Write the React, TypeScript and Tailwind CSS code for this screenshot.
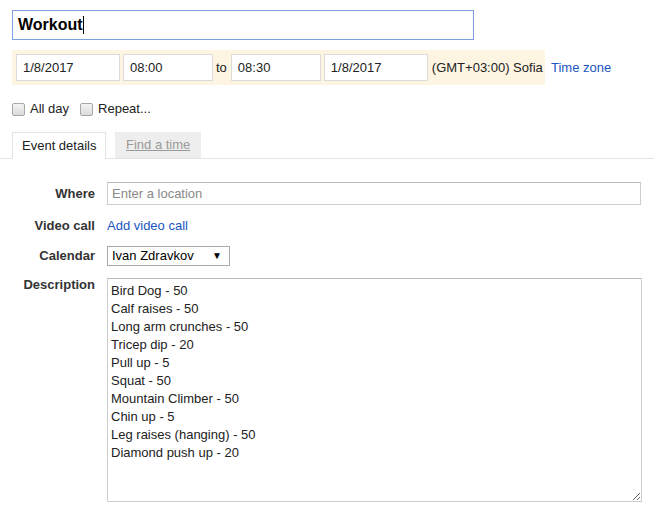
import React from "react";

const EXERCISES = [
  "Bird Dog - 50",
  "Calf raises - 50",
  "Long arm crunches - 50",
  "Tricep dip - 20",
  "Pull up - 5",
  "Squat - 50",
  "Mountain Climber - 50",
  "Chin up - 5",
  "Leg raises (hanging) - 50",
  "Diamond push up - 20",
];

function Field({ value, w, ml }: { value: string; w: string; ml: string }) {
  return (
    <div className={`${w} ${ml} h-[27px] bg-white border border-[#dcdcdc] pl-[6px] flex items-center`}>
      {value}
    </div>
  );
}

function Check({ label }: { label: string }) {
  return (
    <div className="flex items-center">
      <div className="w-[13px] h-[13px] rounded-[2px] border border-[#a8a8a8] bg-gradient-to-b from-[#f4f4f4] to-[#dadada]" />
      <span className="ml-[5px]">{label}</span>
    </div>
  );
}

function Label({ children }: { children: React.ReactNode }) {
  return <div className="w-[95px] text-right font-bold text-[#333] shrink-0">{children}</div>;
}

export default function App() {
  return (
    <div className="w-[654px] h-[512px] bg-white overflow-hidden text-[13px] leading-[16px] text-[#222] font-['Liberation_Sans',Arial,sans-serif]">
      {/* title */}
      <div className="ml-[12px] mt-[10px] w-[462px] h-[30px] border border-[#7d9fe0] flex items-center pl-[5px]">
        <span className="text-[16px] font-bold text-black">Workout</span>
        <span className="w-px h-[18px] bg-black" />
      </div>

      {/* date row */}
      <div className="ml-[12px] mt-[10px] flex items-center">
        <div className="w-[533px] h-[35px] bg-[#fdf5e2] flex items-center pl-[4px]">
          <Field value="1/8/2017" w="w-[104px]" ml="" />
          <Field value="08:00" w="w-[90px]" ml="ml-[3px]" />
          <span className="ml-[3px]">to</span>
          <Field value="08:30" w="w-[90px]" ml="ml-[4px]" />
          <Field value="1/8/2017" w="w-[104px]" ml="ml-[3px]" />
          <span className="ml-[4px]">(GMT+03:00) Sofia</span>
        </div>
        <a className="ml-[6px] text-[#1a55c2]">Time zone</a>
      </div>

      {/* checkboxes */}
      <div className="ml-[12px] mt-[16px] flex items-center gap-[11px]">
        <Check label="All day" />
        <Check label="Repeat..." />
      </div>

      {/* tabs */}
      <div className="mt-[15px] h-[27px] border-b border-[#e3e3e3] flex items-end pl-[12px]">
        <div className="w-[94px] h-[27px] border border-b-0 border-[#e3e3e3] bg-white flex items-center pl-[9px] -mb-px">
          Event details
        </div>
        <div className="ml-[9px] w-[86px] h-[26px] bg-[#eeeeee] flex items-center pl-[11px] text-[#9a9a9a] underline">
          Find a time
        </div>
      </div>

      {/* form */}
      <div className="flex items-center mt-[23px]">
        <Label>Where</Label>
        <div className="ml-[12px] w-[534px] h-[23px] border border-[#cdcdcd] border-t-[#bdbdbd] flex items-center pl-[4px] text-[#8a8a8a]">
          Enter a location
        </div>
      </div>

      <div className="flex items-center mt-[13px]">
        <Label>Video call</Label>
        <a className="ml-[12px] text-[#1a55c2]">Add video call</a>
      </div>

      <div className="flex items-center mt-[12px]">
        <Label>Calendar</Label>
        <div className="ml-[12px] w-[123px] h-[20px] border border-[#a9a9a9] flex items-center pl-[4px] pr-[7px] justify-between text-black">
          <span>Ivan Zdravkov</span>
          <span className="text-[10px]">▼</span>
        </div>
      </div>

      <div className="flex items-start mt-[12px]">
        <div className="leading-[14px]">
          <Label>Description</Label>
        </div>
        <textarea
          readOnly
          value={EXERCISES.join("\n")}
          className="ml-[12px] w-[535px] h-[224px] border border-[#cdcdcd] border-t-[#bdbdbd] pl-[3px] pt-[3px] leading-[18px] text-[#222] outline-none resize"
        />
      </div>
    </div>
  );
}
